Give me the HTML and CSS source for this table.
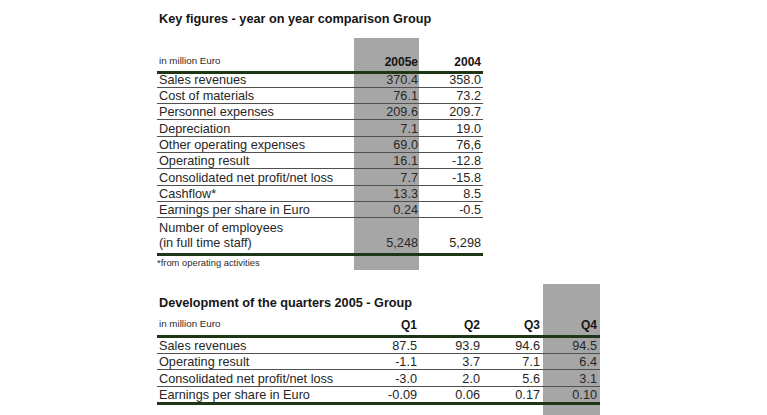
FILE: index.html
```html
<!DOCTYPE html>
<html>
<head>
<meta charset="utf-8">
<link rel="stylesheet" href="styles.css">
</head>
<body>
<div class="page">
  <section class="sec sec1">
    <h1 class="title">Key figures - year on year comparison Group</h1>
    <div class="tbl t1">
      <div class="row spacer"><div class="c lab"></div><div class="c n hi"></div><div class="c n"></div></div>
      <div class="row head">
        <div class="c lab small">in million Euro</div>
        <div class="c n hi">2005e</div>
        <div class="c n">2004</div>
      </div>
      <div class="row body first"><div class="c lab">Sales revenues</div><div class="c n hi">370.4</div><div class="c n">358.0</div></div>
      <div class="row body"><div class="c lab">Cost of materials</div><div class="c n hi">76.1</div><div class="c n">73.2</div></div>
      <div class="row body"><div class="c lab">Personnel expenses</div><div class="c n hi">209.6</div><div class="c n">209.7</div></div>
      <div class="row body"><div class="c lab">Depreciation</div><div class="c n hi">7.1</div><div class="c n">19.0</div></div>
      <div class="row body"><div class="c lab">Other operating expenses</div><div class="c n hi">69.0</div><div class="c n">76,6</div></div>
      <div class="row body"><div class="c lab">Operating result</div><div class="c n hi">16.1</div><div class="c n">-12.8</div></div>
      <div class="row body"><div class="c lab">Consolidated net profit/net loss</div><div class="c n hi">7.7</div><div class="c n">-15.8</div></div>
      <div class="row body"><div class="c lab">Cashflow*</div><div class="c n hi">13.3</div><div class="c n">8.5</div></div>
      <div class="row body"><div class="c lab">Earnings per share in Euro</div><div class="c n hi">0.24</div><div class="c n">-0.5</div></div>
      <div class="row body tall last"><div class="c lab">Number of employees<br>(in full time staff)</div><div class="c n hi">5,248</div><div class="c n">5,298</div></div>
      <div class="row foot"><div class="c lab small note">*from operating activities</div><div class="c n hi"></div><div class="c n"></div></div>
    </div>
  </section>

  <section class="sec sec2">
    <div class="tbl t2">
      <div class="row spacer2"><div class="c wide"></div><div class="c n q4 hi"></div></div>
      <div class="row titlerow"><div class="c wide"><h2 class="title">Development of the quarters 2005 - Group</h2></div><div class="c n q4 hi"></div></div>
      <div class="row head2">
        <div class="c lab small">in million Euro</div>
        <div class="c n q1">Q1</div>
        <div class="c n q2">Q2</div>
        <div class="c n q3">Q3</div>
        <div class="c n q4 hi">Q4</div>
      </div>
      <div class="row body2 first2"><div class="c lab">Sales revenues</div><div class="c n q1">87.5</div><div class="c n q2">93.9</div><div class="c n q3">94.6</div><div class="c n q4 hi">94.5</div></div>
      <div class="row body2"><div class="c lab">Operating result</div><div class="c n q1">-1.1</div><div class="c n q2">3.7</div><div class="c n q3">7.1</div><div class="c n q4 hi">6.4</div></div>
      <div class="row body2"><div class="c lab">Consolidated net profit/net loss</div><div class="c n q1">-3.0</div><div class="c n q2">2.0</div><div class="c n q3">5.6</div><div class="c n q4 hi">3.1</div></div>
      <div class="row body2 last2"><div class="c lab">Earnings per share in Euro</div><div class="c n q1">-0.09</div><div class="c n q2">0.06</div><div class="c n q3">0.17</div><div class="c n q4 hi">0.10</div></div>
      <div class="row tail"><div class="c wide"></div><div class="c n q4 hi"></div></div>
    </div>
  </section>
</div>
</body>
</html>
```

FILE: styles.css
```css
* { box-sizing: border-box; }
html, body { margin: 0; padding: 0; background: #ffffff; }
body {
  font-family: "Liberation Sans", Arial, sans-serif;
  color: #262626;
  width: 767px;
  height: 415px;
  overflow: hidden;
}
.page { padding-left: 157px; }
.sec1 { padding-top: 12px; }
.title {
  margin: 0;
  font-size: 12.7px;
  font-weight: bold;
  line-height: 15px;
  color: #151515;
  padding-left: 2px;
  white-space: nowrap;
}
.tbl { display: flex; flex-direction: column; }
.t1 { width: 326px; margin-top: 11px; }
.row { display: flex; align-items: flex-end; }
.c { font-size: 12.7px; line-height: 12px; white-space: nowrap; }
.c.lab { padding-left: 2px; }
.c.n { text-align: right; }
.hi { background: #a6a6a6; align-self: stretch; display: flex; align-items: flex-end; justify-content: flex-end; }
.small { font-size: 9.8px; line-height: 12px; color: #2a2a2a; }

/* table 1 columns */
.t1 .lab { width: 197px; }
.t1 .n.hi { width: 65px; padding-right: 1px; }
.t1 .n:not(.hi) { width: 64px; padding-right: 2px; }

.spacer { height: 16.5px; }
.head { height: 19px; border-bottom: 3px solid #1e3516; padding-bottom: 3px; }
.head .n { font-weight: bold; font-size: 12px; color: #151515; }
.head .small { padding-bottom: 1px; }
.head .hi { padding-bottom: 3px; margin-bottom: -3px; }

.body { height: 16.33px; border-bottom: 1px solid #505050; }
.body .c { padding-bottom: 1px; }
.body.first { height: 14.2px; }
.body.tall { height: 38px; border-bottom: 3px solid #1e3516; }
.body.tall .c { padding-bottom: 4px; }
.body.tall .lab { line-height: 15px; padding-bottom: 2.5px; }
.foot { height: 13.7px; align-items: stretch; }
.foot .note { font-size: 9.4px; padding-left: 0; display: flex; align-items: center; }

/* table 2 */
.sec2 { margin-top: 14px; }
.t2 { width: 443px; }
.t2 .wide { flex: 1; }
.t2 .lab { width: 200px; }
.t2 .q1 { width: 62px; padding-right: 2px; }
.t2 .q2 { width: 63px; padding-right: 2px; }
.t2 .q3 { width: 61px; padding-right: 3px; }
.t2 .q4 { width: 57px; padding-right: 3px; }
.spacer2 { height: 11.5px; }
.titlerow { height: 15px; }
.titlerow .title { padding-left: 2px; }
.head2 { height: 27.5px; border-bottom: 3px solid #1e3516; padding-bottom: 4px; }
.head2 .n { font-weight: bold; font-size: 12px; color: #151515; }
.head2 .small { padding-bottom: 1px; }
.head2 .hi { padding-bottom: 4px; margin-bottom: -4px; }
.body2 { height: 16.65px; border-bottom: 1px solid #505050; }
.body2 .c { padding-bottom: 1px; }
.body2.first2 { height: 15.7px; }
.body2.last2 { height: 17.7px; border-bottom: 3px solid #1e3516; }
.tail { height: 20px; align-items: stretch; }
```
